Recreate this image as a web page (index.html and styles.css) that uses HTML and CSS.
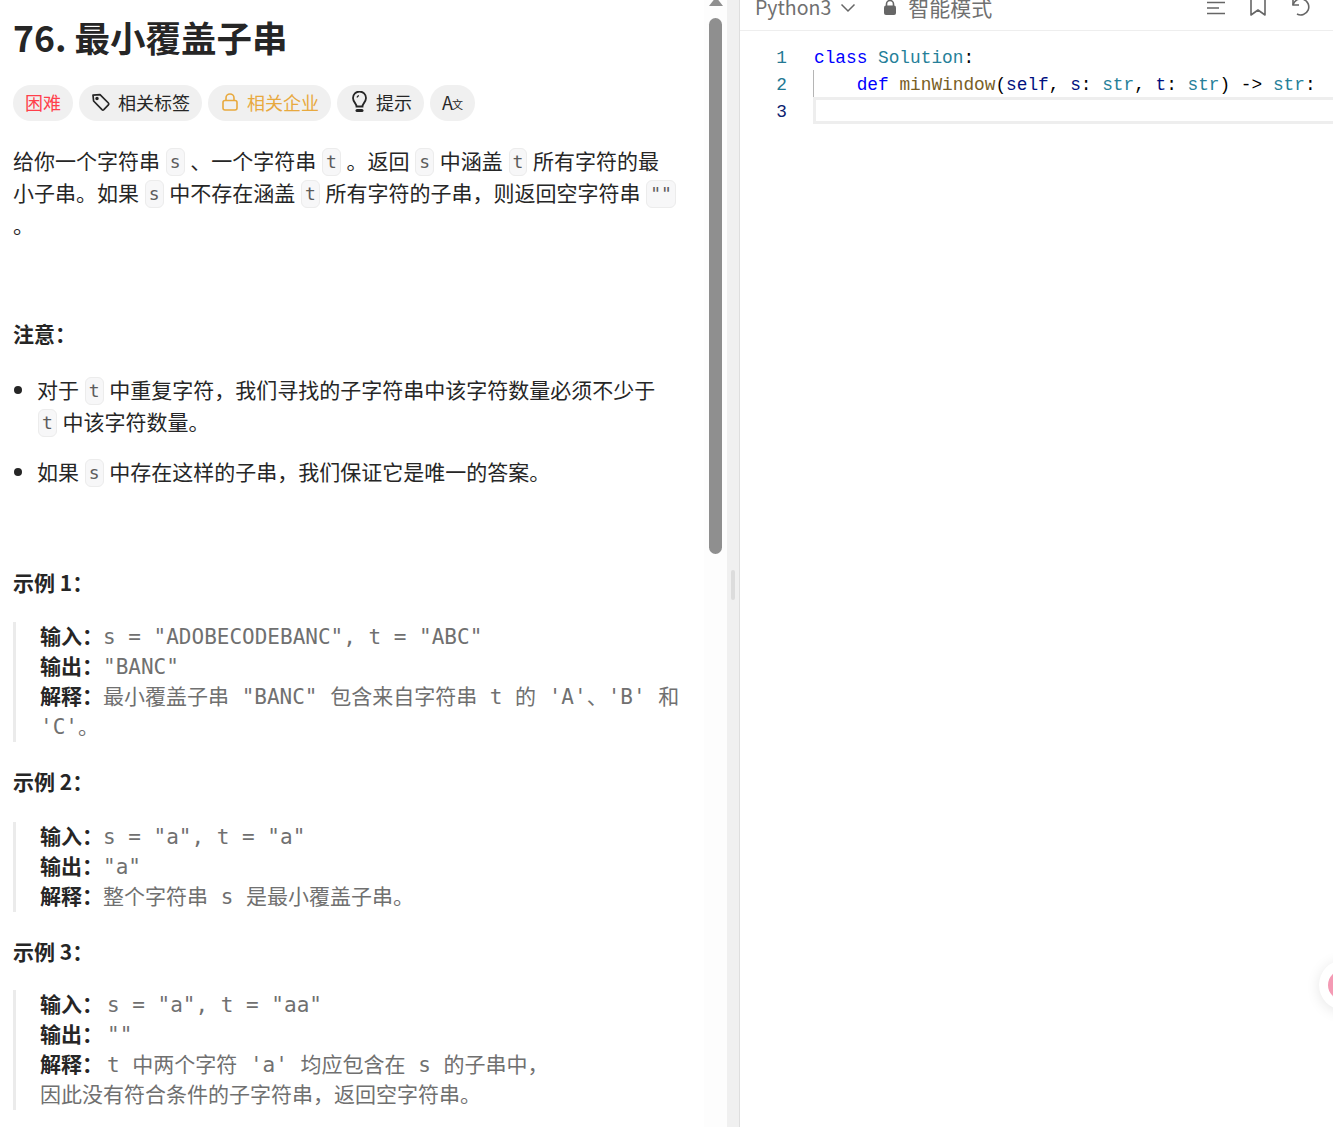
FILE: index.html
```html
<!DOCTYPE html>
<html lang="zh-CN">
<head>
    <meta charset="UTF-8">
    <meta name="viewport" content="width=device-width, initial-scale=1.0">
    <title>76. 最小覆盖子串</title>
    <link rel="stylesheet" href="styles.css">
</head>
<body>
    <div class="page">
        <div class="desc">
            <h1 class="title">76. 最小覆盖子串</h1>

            <div class="chips">
                <div class="chip hard">困难</div>
                <div class="chip">
                    <svg width="20" height="20" viewBox="0 0 20 20" fill="none" stroke="#262626" stroke-width="1.7" stroke-linejoin="round"><path d="M2 3.2 2.6 9 11 17.6a1.3 1.3 0 0 0 1.8 0l4.6-4.8a1.3 1.3 0 0 0 0-1.8L9 2.6z"/><circle cx="6" cy="6.6" r=".9" fill="#262626"/></svg>
                    相关标签
                </div>
                <div class="chip company">
                    <svg width="20" height="20" viewBox="0 0 20 20" fill="none" stroke="#e8a93e" stroke-width="1.6"><rect x="3" y="8.5" width="14" height="9.5" rx="2"/><path d="M6 8.5V6a4 4 0 0 1 8 0v2.5"/></svg>
                    相关企业
                </div>
                <div class="chip">
                    <svg width="20" height="22" viewBox="0 0 20 22" fill="none" stroke="#262626" stroke-width="1.8"><path d="M8 15.500c0-3-3.500-4.500-3.500-8.500a6.500 6.500 0 0 1 13 0c0 4-3.500 5.500-3.500 8.500z" transform="translate(-.500)"/><path d="M8 19.500h5" stroke-width="3" stroke-linecap="round"/><path d="M8 6.500a2.500 2.500 0 0 1 2-1.800" stroke-width="1.200"/></svg>
                    提示
                </div>
                <div class="chip translate"><span class="big-a">A</span><span class="small-x">文</span></div>
            </div>

            <p class="para intro">给你一个字符串 <code>s</code> 、一个字符串 <code>t</code> 。返回 <code>s</code> 中涵盖 <code>t</code> 所有字符的最小子串。如果 <code>s</code> 中不存在涵盖 <code>t</code> 所有字符的子串&#xFF0C;则返回空字符串 <code>""</code> 。</p>

            <p class="para note"><strong>注意&#xFF1A;</strong></p>

            <ul class="notes">
                <li>对于 <code>t</code> 中重复字符&#xFF0C;我们寻找的子字符串中该字符数量必须不少于 <code>t</code> 中该字符数量。</li>
                <li>如果 <code>s</code> 中存在这样的子串&#xFF0C;我们保证它是唯一的答案。</li>
            </ul>

            <p class="para ex-title first"><strong>示例 1&#xFF1A;</strong></p>
            <pre class="example"><strong>输入&#xFF1A;</strong>s = "ADOBECODEBANC", t = "ABC"
<strong>输出&#xFF1A;</strong>"BANC"
<strong>解释&#xFF1A;</strong>最小覆盖子串 "BANC" 包含来自字符串 t 的 'A'、'B' 和 'C'。</pre>

            <p class="para ex-title"><strong>示例 2&#xFF1A;</strong></p>
            <pre class="example second"><strong>输入&#xFF1A;</strong>s = "a", t = "a"
<strong>输出&#xFF1A;</strong>"a"
<strong>解释&#xFF1A;</strong>整个字符串 s 是最小覆盖子串。</pre>

            <p class="para ex-title third"><strong>示例 3&#xFF1A;</strong></p>
            <pre class="example wide"><strong>输入&#xFF1A;</strong>s = "a", t = "aa"
<strong>输出&#xFF1A;</strong>""
<strong>解释&#xFF1A;</strong>t 中两个字符 'a' 均应包含在 s 的子串中&#xFF0C;
因此没有符合条件的子字符串&#xFF0C;返回空字符串。</pre>
        </div>

        <div class="scroll-track">
            <div class="scroll-arrow"></div>
            <div class="scroll-thumb"></div>
        </div>

        <div class="divider"><div class="divider-handle"></div></div>

        <div class="editor">
            <div class="editor-head">
                <span class="lang">Python3</span>
                <svg class="chevron" width="16" height="10" viewBox="0 0 16 10" fill="none" stroke="#666" stroke-width="1.500"><path d="M1.500 1.500 8 8l6.500-6.500"/></svg>
                <svg class="lock" width="14" height="17" viewBox="0 0 14 17" fill="#666"><path d="M3.500 7V5a3.500 3.500 0 0 1 7 0v2" fill="none" stroke="#666" stroke-width="1.600"/><rect x="1" y="6.500" width="12" height="9.500" rx="2"/></svg>
                <span class="mode">智能模式</span>
                <span class="head-space"></span>
                <svg class="tool" width="20" height="16" viewBox="0 0 20 16" fill="none" stroke="#666" stroke-width="1.500"><path d="M1 2.500h18M1 8h12M1 13.500h18"/></svg>
                <svg class="tool" width="18" height="20" viewBox="0 0 18 20" fill="none" stroke="#666" stroke-width="1.600" stroke-linejoin="round"><path d="M2 -2h14v19l-7-5-7 5z"/></svg>
                <svg class="tool" width="22" height="20" viewBox="0 0 22 20" fill="none" stroke="#666" stroke-width="1.600"><path d="M3 1v6h6"/><path d="M3 7a8 8 0 1 1 4 9"/></svg>
            </div>
            <div class="code">
                <div class="line"><span class="num">1</span><span class="src plain"><span class="kw">class</span> <span class="ty">Solution</span>:</span></div>
                <div class="line guide"><span class="num">2</span><span class="src">    <span class="kw">def</span> <span class="fn">minWindow</span>(<span class="var">self</span>, <span class="var">s</span>: <span class="ty">str</span>, <span class="var">t</span>: <span class="ty">str</span>) -&gt; <span class="ty">str</span>:</span></div>
                <div class="line active"><span class="num cur">3</span><span class="src"></span></div>
            </div>
        </div>

        <div class="float-btn"><div class="float-dot"></div></div>
    </div>
</body>
</html>
```

FILE: styles.css
```css
* {
    box-sizing: border-box;
}

html, body {
    margin: 0;
    height: 100%;
    overflow: hidden;
}

body {
    background: #fff;
    color: #262626;
    font-family: "Noto Sans CJK SC", sans-serif;
}

.page {
    display: flex;
    height: 1127px;
    position: relative;
    overflow: hidden;
}

.desc {
    width: 704px;
    flex: none;
    padding: 13px 24px 0 13px;
    overflow: hidden;
}

.title {
    margin: 0;
    font-size: 35.500px;
    line-height: 48px;
    font-weight: 700;
}

.chips {
    display: flex;
    gap: 6px;
    margin-top: 24px;
}

.chip {
    display: flex;
    align-items: center;
    gap: 7px;
    height: 36px;
    padding: 0 12px 2px;
    border-radius: 18px;
    background: #f0f0f0;
    font-size: 18px;
    color: #262626;
}

.hard {
    color: #ff3f4b;
}

.company {
    color: #e8a93e;
}

.translate {
    gap: 0;
}

.big-a {
    font-size: 18px;
}

.small-x {
    font-size: 11px;
    margin-top: 4px;
    margin-left: -1px;
}

.para {
    margin: 0;
    font-size: 21px;
    line-height: 32px;
}

.para strong {
    font-weight: 700;
}

.intro {
    margin-top: 23px;
}

code {
    display: inline-block;
    height: 28px;
    margin: 4px 1px 0;
    padding: 0 3px;
    border: 1px solid #ececec;
    border-radius: 6px;
    background: #f7f7f8;
    font-family: "DejaVu Sans Mono", monospace;
    font-size: 18px;
    line-height: 26px;
    color: #5c5c5c;
    vertical-align: top;
}

.note {
    margin-top: 77px;
}

.notes {
    margin: 24px 0 0;
    padding: 0 0 0 24px;
    font-size: 21px;
    line-height: 32px;
}

.notes li {
    margin-bottom: 18px;
}

.first {
    margin-top: 79px;
}

.example {
    margin: 24px 0 23px;
    padding: 0 0 0 24px;
    border-left: 3px solid #ebebeb;
    font-family: "DejaVu Sans Mono", "Noto Sans CJK SC", monospace;
    font-size: 21px;
    line-height: 30px;
    color: #707070;
    white-space: pre-wrap;
}

.example strong {
    color: #262626;
    font-weight: 700;
}

.second {
    margin-top: 25px;
}

.third {
    margin-top: 1px;
}

.wide {
    margin-top: 23px;
}

.wide strong {
    margin-right: 4px;
}

.scroll-track {
    width: 23px;
    flex: none;
    padding: 0 5px;
    background: #fdfdfd;
}

/* arrow is cut by the top of the window */
.scroll-arrow {
    width: 0;
    height: 0;
    margin-top: -3px;
    margin-bottom: 12px;
    margin-left: -.500px;
    border-left: 7px solid transparent;
    border-right: 7px solid transparent;
    border-bottom: 9px solid #8f8f8f;
}

.scroll-thumb {
    width: 13px;
    height: 536px;
    border-radius: 7px;
    background: #8f8f8f;
}

.divider {
    width: 13px;
    flex: none;
    padding-top: 570px;
    padding-left: 4px;
    background: #f0f0f0;
    border-right: 1px solid #dedede;
}

.divider-handle {
    width: 4px;
    height: 30px;
    border-radius: 2px;
    background: #dcdcdc;
}

.editor {
    flex: 1;
    min-width: 0;
}

.editor-head {
    display: flex;
    align-items: center;
    height: 31px;
    padding: 0 21px 17px 15px;
    border-bottom: 1px solid #eeeeee;
    color: #707070;
    overflow: hidden;
}

.lang {
    font-size: 19.500px;
    line-height: 30px;
}

.chevron {
    margin-left: 9px;
    margin-top: 2px;
}

.lock {
    margin-left: 27px;
    margin-top: 2px;
}

.mode {
    margin-left: 11px;
    font-size: 21px;
    line-height: 30px;
}

.head-space {
    flex: 1;
}

.tool {
    margin-left: 23px;
    margin-top: 2px;
}

.code {
    padding-top: 12px;
    font-family: "Liberation Mono", monospace;
    font-size: 17.800px;
    line-height: 31px;
    color: #000;
}

.line {
    display: flex;
    height: 27px;
}

.num {
    width: 47px;
    flex: none;
    text-align: right;
    color: #237893;
}

.cur {
    color: #0b216f;
}

.src {
    flex: 1;
    margin-left: 26px;
    white-space: pre;
}

.plain {
    padding-left: 1px;
}

.guide .src {
    border-left: 1px solid #b5b5b5;
}

.active .src {
    border: 3px solid #eeeeee;
    border-right: 0;
}

.kw {
    color: #0000ff;
}

.ty {
    color: #267f99;
}

.fn {
    color: #795e26;
}

.var {
    color: #001080;
}

/* floating button cut off by the window edge */
.float-btn {
    position: absolute;
    left: 1319px;
    top: 960px;
    width: 50px;
    height: 50px;
    padding: 10px 9px;
    border-radius: 25px;
    background: #fff;
    box-shadow: 0 2px 14px rgba(0, 0, 0, .1);
}

.float-dot {
    width: 30px;
    height: 30px;
    border-radius: 15px;
    background: #f49ab4;
}
```
